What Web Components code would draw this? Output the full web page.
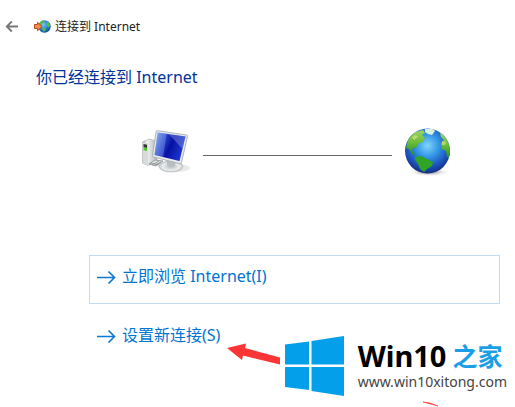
<!DOCTYPE html>
<html lang="zh-CN">
<head>
<meta charset="utf-8">
<title>连接到 Internet</title>
<style>
    body {
        margin: 0;
        background: #fff;
        font-family: "Noto Sans", "Noto Sans CJK SC", sans-serif;
    }
</style>
</head>
<body>
<connect-wizard>
    <wizard-header slot="header">连接到 Internet</wizard-header>
    <span slot="heading">你已经连接到 Internet</span>
    <network-map slot="map"></network-map>
    <command-link active>立即浏览 Internet(I)</command-link>
    <command-link>设置新连接(S)<pointer-arrow slot="note"></pointer-arrow></command-link>
    <site-mark slot="mark" url="www.win10xitong.com">Win10<span slot="suffix">之家</span></site-mark>
</connect-wizard>

<script>
class ConnectWizard extends HTMLElement {
    constructor() {
        super();
        this.attachShadow({ mode: 'open' });
        this.shadowRoot.innerHTML = `
        <style>
            :host {
                display: block;
                position: relative;
                min-height: 100vh;
                overflow: hidden;
            }
            h1 {
                margin: 28px 36px 0;
                font-size: 16px;
                line-height: 24px;
                font-weight: 400;
                color: #003399;
            }
            .map {
                padding: 35px 63px 0 140px;
            }
            .options {
                display: flex;
                flex-direction: column;
                gap: 10px;
                padding: 77px 15px 0 89px;
            }
            .mark {
                position: absolute;
                right: 8px;
                bottom: 0;
            }
        </style>

        <slot name="header"></slot>
        <main>
            <h1><slot name="heading"></slot></h1>
            <div class="map"><slot name="map"></slot></div>
            <div class="options"><slot></slot></div>
        </main>
        <div class="mark"><slot name="mark"></slot></div>
        `;
    }
}

class WizardHeader extends HTMLElement {
    constructor() {
        super();
        this.attachShadow({ mode: 'open' });
        this.shadowRoot.innerHTML = `
        <style>
            :host {
                display: block;
                padding-top: 17px;
            }
            header {
                display: flex;
                align-items: center;
                height: 20px;
                padding-left: 5px;
                font-size: 12px;
                line-height: 20px;
                color: #222;
            }
            button {
                display: flex;
                padding: 0;
                border: 0;
                background: none;
            }
            .app {
                margin: 0 4px 0 15px;
            }
            svg {
                display: block;
            }
        </style>

        <header>
            <button type="button" aria-label="返回">
                <svg width="14" height="14" viewBox="0 0 14 14" fill="none" stroke="#777" stroke-width="1.8">
                    <path d="M13 6.5H2M6.8 1.5 1.8 6.5l5 5"/>
                </svg>
            </button>
            <svg class="app" width="17" height="16" viewBox="0 0 17 16">
                <defs>
                    <radialGradient id="sea" cx=".4" cy=".35" r=".7">
                        <stop offset="0" stop-color="#7ccbf5"/>
                        <stop offset=".6" stop-color="#2478ce"/>
                        <stop offset="1" stop-color="#133f9a"/>
                    </radialGradient>
                </defs>
                <circle cx="10.5" cy="7.5" r="6.2" fill="url(#sea)"/>
                <path d="M5.500 4Q8 .8 10 1.300L9.500 3 7.500 5.500 6 6ZM13 2q2.800 2 3.200 5l-2 1.500-1.500-2zM9 8.500l3 1.200-.8 2.300L9.500 12.800 8.300 10.500Z" fill="#4fc43c"/>
                <path d="M.5 5.500h3V3.300L8 7.500 3.500 11.700V9.500h-3z" fill="#f58b4c" stroke="#bd461b" stroke-width="1"/>
            </svg>
            <span><slot></slot></span>
        </header>
        `;
    }
}

class NetworkMap extends HTMLElement {
    constructor() {
        super();
        this.attachShadow({ mode: 'open' });
        this.shadowRoot.innerHTML = `
        <style>
            :host {
                display: flex;
                align-items: center;
            }
            svg {
                display: block;
                flex: none;
            }
            .line {
                flex: 1;
                height: 1px;
                margin: 9px 10px 0 13px;
                background: #666;
            }
        </style>

        <svg width="50" height="54" viewBox="0 0 50 54" role="img" aria-label="计算机">
            <defs>
                <linearGradient id="screen" x1="0" y1="0" x2="1" y2=".4">
                    <stop offset="0" stop-color="#7aa4ef"/>
                    <stop offset=".35" stop-color="#2746cf"/>
                    <stop offset=".6" stop-color="#0710a4"/>
                    <stop offset="1" stop-color="#1c34cb"/>
                </linearGradient>
                <linearGradient id="case">
                    <stop offset="0" stop-color="#8e9294"/>
                    <stop offset=".3" stop-color="#f1f3f3"/>
                    <stop offset="1" stop-color="#b1b7b9"/>
                </linearGradient>
                <radialGradient id="foot">
                    <stop offset="0" stop-color="#b5babb"/>
                    <stop offset=".7" stop-color="#eceeee"/>
                    <stop offset="1" stop-color="#c3c8c9"/>
                </radialGradient>
            </defs>
            <ellipse cx="36" cy="44" rx="14" ry="4" fill="#ddd" opacity=".6"/>
            <path d="M2.500 18 9 15l8 2v20L8 41.500 2.500 39z" fill="url(#case)" stroke="#a4a8a9" stroke-width=".6"/>
            <path d="M2.500 18l5.500 1.500v22L2.500 39z" fill="#d8dbdc"/>
            <path d="M3.500 20l3.500 .8v3.200l-3.500-.8z" fill="#333"/>
            <path d="M3.500 23.500l3.500 .8v2.700l-3.500-.8z" fill="#48cd24"/>
            <path d="M9 40l6-4 8 1-7 5zM12 41l7-4M15 41l6-3M10 39l9 2" fill="#e0e2e2" stroke="#8b9193" stroke-width=".8"/>
            <ellipse cx="31" cy="42.500" rx="12" ry="5.500" fill="url(#foot)" stroke="#b1b7b9" stroke-width=".6"/>
            <path d="M26 34l10 2-1 6q-4 2-8-1z" fill="#b9bec0"/>
            <path d="M16 8q.2-1.500 1.700-1.300L46.500 11q1.200.2 1 1.500L41.500 38.500q-.3 1.500-2 1.200L13.500 33q-1.200-.3-1-1.500z" fill="#e6e9ea" stroke="#9da4a8" stroke-width=".8"/>
            <path d="M17.700 8.500 45.500 12.500 39.500 37 14.500 31z" fill="url(#screen)"/>
            <path d="M17.700 8.500l9 1.300L23 33l-8.500-2z" fill="#cfe2ff" opacity=".25"/>
            <path d="M29 10.200l16.500 2.300-3 12.500z" fill="#b8cbfb" opacity=".32"/>
        </svg>
        <div class="line"></div>
        <svg width="50" height="54" viewBox="0 0 50 54" role="img" aria-label="Internet">
            <defs>
                <radialGradient id="ocean" cx=".5" cy=".38" r=".62">
                    <stop offset="0" stop-color="#7ed5fb"/>
                    <stop offset=".4" stop-color="#3597e5"/>
                    <stop offset=".75" stop-color="#1c54bd"/>
                    <stop offset="1" stop-color="#142c83"/>
                </radialGradient>
                <linearGradient id="land" x1="0" y1="0" x2="0" y2="1">
                    <stop offset="0" stop-color="#9bd56a"/>
                    <stop offset=".5" stop-color="#6cbc3a"/>
                    <stop offset="1" stop-color="#219022"/>
                </linearGradient>
                <radialGradient id="shade">
                    <stop offset=".3" stop-color="#777"/>
                    <stop offset="1" stop-color="#fff" stop-opacity="0"/>
                </radialGradient>
                <clipPath id="ball"><circle cx="25.500" cy="27" r="22.500"/></clipPath>
            </defs>
            <ellipse cx="27" cy="48" rx="21" ry="4.500" fill="url(#shade)" opacity=".6"/>
            <circle cx="25.500" cy="27" r="22.500" fill="url(#ocean)"/>
            <g clip-path="url(#ball)">
                <path d="M5 20Q6 13 13 8l8-2 2 3-3 2 3 3-2 4-4 1-2 4-4 1-1 3 4 4-4-1-3-5-3-1z" fill="url(#land)"/>
                <path d="M23 5l8 0 2 2-3 4-4-1-3-2z" fill="#d8f1dc"/>
                <path d="M13 33l6-1 6 3 6 3-1 4-5 3-3 3-4-3-2-5-3-4z" fill="#2fa426"/>
                <path d="M38 9l4 2 5 5 3 11-2 7-3-1-1-6-4-2-1-6 3-3-3-3z" fill="url(#land)"/>
                <path d="M40 17l4 1-1 3-3 0zM10 13l4-2 2 2-4 3z" fill="#e3e77d" opacity=".6"/>
            </g>
        </svg>
        `;
    }
}

class CommandLink extends HTMLElement {
    constructor() {
        super();
        this.attachShadow({ mode: 'open' });
        this.shadowRoot.innerHTML = `
        <style>
            :host {
                display: flex;
                position: relative;
                box-sizing: border-box;
                height: 49px;
                border: 1px solid transparent;
            }
            :host([active]) {
                border-color: #c3dcf1;
            }
            a {
                display: flex;
                flex: 1;
                align-items: flex-start;
                gap: 6px;
                padding: 8px 7px;
                font-size: 16px;
                line-height: 24px;
                color: #0074d1;
                text-decoration: none;
            }
            svg {
                display: block;
                margin-top: 6px;
            }
            .note {
                position: absolute;
                top: 28px;
                left: 137px;
            }
        </style>

        <a href="#">
            <svg width="19" height="14" viewBox="0 0 19 14" fill="none" stroke="#0a7ad3" stroke-width="1.6">
                <path d="M0 7.500h17M11.500 1.500l6 6-6 6"/>
            </svg>
            <span><slot></slot></span>
        </a>
        <div class="note"><slot name="note"></slot></div>
        `;
    }
}

class PointerArrow extends HTMLElement {
    constructor() {
        super();
        this.attachShadow({ mode: 'open' });
        this.shadowRoot.innerHTML = `
        <style>
            :host, svg {
                display: block;
            }
        </style>

        <svg width="53" height="22" viewBox="0 0 53 22">
            <path d="M0 5 19 0.500 18 5 53 14.500V21.500L16 12.500 15 17Z" fill="#fb3435"/>
        </svg>
        `;
    }
}

class SiteMark extends HTMLElement {
    constructor() {
        super();
        this.attachShadow({ mode: 'open' });
        this.shadowRoot.innerHTML = `
        <style>
            :host {
                display: flex;
                flex-direction: column;
            }
            .brand {
                display: flex;
                align-items: center;
                gap: 14px;
            }
            .name {
                display: flex;
                align-items: center;
                gap: 6px;
                font-size: 29px;
                line-height: 32px;
                font-weight: 700;
                color: #000;
            }
            .suffix {
                font-size: 25px;
                color: #1a9ee8;
            }
            .url {
                font-size: 14px;
                line-height: 20px;
                color: #444;
            }
            svg {
                display: block;
            }
            .stroke {
                margin-left: 138px;
            }
        </style>

        <div class="brand">
            <svg width="60" height="60" viewBox="0 0 60 60" fill="#049fea">
                <path d="M1 8.500 25 5.500V28.500H1ZM27.500 5 60 0V28.500H27.500ZM1 31H25V54L1 51ZM27.500 31H60V60L27.500 55Z"/>
            </svg>
            <div>
                <div class="name"><slot></slot><span class="suffix"><slot name="suffix"></slot></span></div>
                <div class="url"></div>
            </div>
        </div>
        <svg class="stroke" width="18" height="11" viewBox="0 0 18 11">
            <path d="M1 6 16 10 8 7Z" fill="#fb3435" stroke="#fb3435" stroke-width=".6"/>
        </svg>
        `;
        this.shadowRoot.querySelector('.url').textContent = this.getAttribute('url');
    }
}

customElements.define('connect-wizard', ConnectWizard);
customElements.define('wizard-header', WizardHeader);
customElements.define('network-map', NetworkMap);
customElements.define('command-link', CommandLink);
customElements.define('pointer-arrow', PointerArrow);
customElements.define('site-mark', SiteMark);
</script>
</body>
</html>
